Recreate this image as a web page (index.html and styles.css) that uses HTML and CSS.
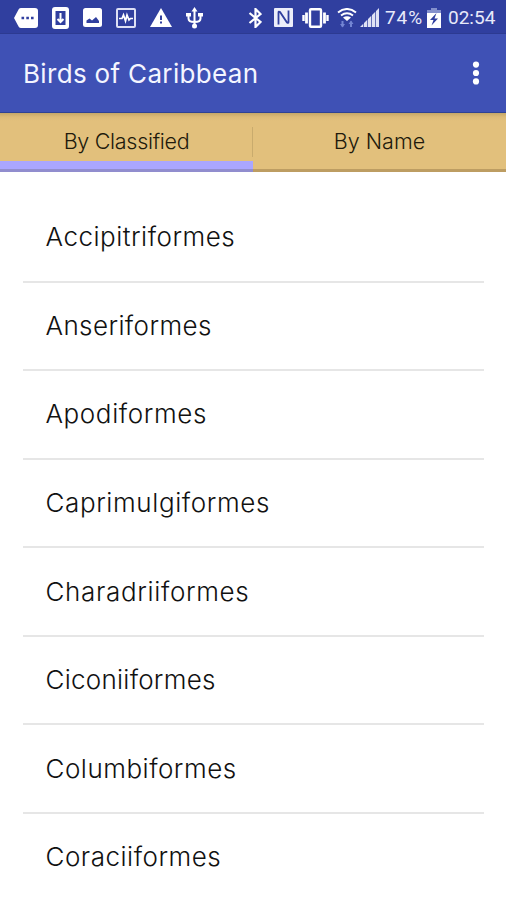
FILE: index.html
```html
<!DOCTYPE html>
<html lang="en">

<head>
  <meta charset="UTF-8">
  <meta name="viewport" content="width=device-width, initial-scale=1.0">
  <title>Birds of Caribbean</title>
  <link rel="stylesheet" href="styles.css">
</head>

<body>
  <div class="status-bar">
    <div class="notifications">
      <svg width="24" height="20" viewBox="0 0 24 20">
        <path fill="#fff" d="M7 0h14q3 0 3 3v14q0 3-3 3H7q-1.500 0-2.300-1.200L0 10l4.700-8.800Q5.500 0 7 0z" />
        <path fill="#303f9f" d="M7.500 8.700h2.600v2.600H7.500zM12.300 8.700h2.600v2.600h-2.600zM17 8.700h2.600v2.600H17z" />
      </svg>
      <svg width="17" height="22" viewBox="0 0 17 22">
        <rect width="17" height="22" rx="3" fill="#fff" />
        <path fill="#303f9f" d="M3.500 4h10v14h-10z" />
        <path d="M8.500 6v9M5.500 12l3 3 3-3" fill="none" stroke="#fff" stroke-width="2" />
      </svg>
      <svg width="19" height="19" viewBox="0 0 19 19">
        <rect width="19" height="19" rx="2.500" fill="#fff" />
        <path fill="#303f9f" d="M3.500 15v-2.500l3-2 2.500 2 4-3.500 3 4V15z" />
      </svg>
      <svg width="20" height="20" viewBox="0 0 20 20">
        <rect x="1" y="1" width="18" height="18" rx="1" fill="none" stroke="#dde0f5" stroke-width="2" />
        <path d="M3 10.500h3l1.500-3.500 2 6 1.500-6 2 5 1.500-1.500H17" fill="none" stroke="#fff" stroke-width="1.700" />
      </svg>
      <svg width="22" height="19" viewBox="0 0 22 19">
        <path fill="#fff" d="M11 0l11 19H0z" />
        <path fill="#303f9f" d="M10 7.500h2v4.500h-2zM10 13.500h2v2h-2z" />
      </svg>
      <svg width="17" height="22" viewBox="0 0 17 22">
        <path d="M8.500 3v16M2.500 7v4.500q0 3.500 6 3.500t6-3.500V7" fill="none" stroke="#fff" stroke-width="2" />
        <path fill="#fff" d="M8.500 0l3 4.500h-6zM0 6h5v3.500H0zM12 6h5v3.500h-5z" />
        <circle cx="8.500" cy="19" r="2.500" fill="#fff" />
      </svg>
    </div>
    <div class="system">
      <svg class="bluetooth" width="14" height="20" viewBox="0 0 14 20">
        <path d="M1.500 5l11 9-5 5V1l5 5-11 9" fill="none" stroke="#fff" stroke-width="2.200" />
      </svg>
      <svg class="nfc" width="19" height="19" viewBox="0 0 19 19">
        <rect width="19" height="19" rx="1" fill="#eceefa" />
        <path d="M4.500 16.500V4.500q0-1.500 1.500-.5l7 10.500q1.500 1 1.500-.5V2.500" fill="none" stroke="#303f9f" stroke-width="1.800" />
      </svg>
      <svg class="vibrate" width="27" height="20" viewBox="0 0 27 20">
        <rect x="8" y="1.200" width="11" height="17.600" rx="1" fill="none" stroke="#fff" stroke-width="2.400" />
        <path d="M4.500 4.500v11M22.500 4.500v11" stroke="#fff" stroke-width="2.800" />
        <path d="M1.500 7v6M25.500 7v6" stroke="#fff" stroke-width="2.400" />
      </svg>
      <svg class="wifi" width="20" height="20" viewBox="0 0 20 20">
        <path d="M1 4.500q9-7 18 0M4 7.500q6-4.500 12 0" fill="none" stroke="#fff" stroke-width="2" />
        <path fill="#fff" d="M6 9.500q4-2.500 8 0l-4 3.500z" />
        <path d="M5.500 13v5.500M14 19v-5.500" stroke="#7385d3" stroke-width="2" />
        <path fill="#7385d3" d="M3 16h5l-2.500 3.500zM11.500 16h5L14 12.500z" />
      </svg>
      <svg class="signal" width="19" height="19" viewBox="0 0 19 19">
        <path fill="#dfe2f4" d="M0 19l3.300-3.300V19zM4 19v-4l3.300-3.300V19zM8 19v-8l3.300-3.300V19zM12 19V7l3.300-3.300V19zM16 19V3l3-3v19z" />
      </svg>
      <span class="percent">74%</span>
      <svg class="battery" width="14" height="20" viewBox="0 0 14 20">
        <path fill="#8490cc" d="M4 0h6v2h4v3H0V2h4z" />
        <path fill="#fff" d="M0 5h14v15H0z" />
        <path fill="#303f9f" d="M9.500 5L3 12h3.500l-2 5.500 6.500-7H7.500z" />
      </svg>
      <span class="clock">02:54</span>
    </div>
  </div>

  <header>
    <h1>Birds of Caribbean</h1>
    <svg width="8" height="24" viewBox="0 0 8 24" fill="#fff">
      <circle cx="4" cy="3.600" r="3.100" />
      <circle cx="4" cy="12" r="3.100" />
      <circle cx="4" cy="20.400" r="3.100" />
    </svg>
  </header>

  <nav>
    <a class="tab active"><span>By Classified</span></a>
    <a class="tab"><span>By Name</span></a>
  </nav>

  <ul class="bird-list">
    <li><span class="accipitriformes">Accipitriformes</span></li>
    <li><span class="anseriformes">Anseriformes</span></li>
    <li><span class="apodiformes">Apodiformes</span></li>
    <li><span class="caprimulgiformes">Caprimulgiformes</span></li>
    <li><span class="charadriiformes">Charadriiformes</span></li>
    <li><span class="ciconiiformes">Ciconiiformes</span></li>
    <li><span class="columbiformes">Columbiformes</span></li>
    <li><span class="coraciiformes">Coraciiformes</span></li>
  </ul>
</body>

</html>
```
FILE: styles.css
```css
* {
  box-sizing: border-box;
}

body {
  margin: 0;
  height: 900px;
  overflow: hidden;
  font-family: Inter, sans-serif;
  background-color: #fff;
  color: #111;
}

svg {
  display: block;
  flex: none;
}

.status-bar {
  display: flex;
  justify-content: space-between;
  height: 34px;
  padding: 2px 11px 0 14px;
  background-color: #303f9f;
  border-bottom: 1px solid #2c3a91;
  color: #e8eafa;
}

.notifications, .system {
  display: flex;
  align-items: center;
}

.notifications {
  gap: 14px;
}

.nfc {
  margin-left: 12px;
}

.vibrate {
  margin-left: 9px;
}

.wifi {
  margin-left: 8px;
}

.signal {
  margin-left: 3px;
}

.percent, .clock {
  font-family: Roboto, sans-serif;
  font-size: 19px;
  line-height: 20px;
  white-space: nowrap;
}

.percent {
  width: 38px;
  margin-left: 6px;
  letter-spacing: 0.9px;
}

.battery {
  margin-left: 4px;
}

.clock {
  width: 47px;
  margin-left: 7px;
}

header {
  display: flex;
  align-items: center;
  justify-content: space-between;
  height: 79px;
  padding: 0 26px 0 23px;
  background-color: #3f51b5;
  border-bottom: 1px solid #2e4294;
}

h1 {
  margin: 0;
  font-size: 26px;
  font-weight: 400;
  letter-spacing: 0.33px;
  color: #f4f5ff;
}

nav {
  display: flex;
  height: 59px;
  background: linear-gradient(#c5a768, #dcba77 4px, #e2c07c 8px);
}

.tab {
  flex: 1;
  display: flex;
  justify-content: center;
  padding-top: 14px;
  border-bottom: 3px solid #bd9d62;
  font-size: 21.5px;
  font-weight: 350;
  line-height: 29px;
  color: #211a0c;
}

.tab.active {
  border-bottom-color: #918dce;
  letter-spacing: -0.3px;
  background: linear-gradient(#c9ab6d, #c9ab6d) right 14px / 1px 30px no-repeat,
    linear-gradient(#aaa6ff, #aaa6ff) bottom / 100% 8px no-repeat;
}

.bird-list {
  margin: 0;
  padding: 22px 22px 0 23px;
  list-style: none;
}

.bird-list li {
  display: flex;
  align-items: center;
  height: 88.570px;
  padding: 0 22.500px 1px;
  border-bottom: 2px solid #e6e6e6;
  font-size: 26px;
  font-weight: 350;
}

.accipitriformes {
  letter-spacing: 0.5px;
}

.anseriformes {
  letter-spacing: 0.4px;
}

.apodiformes {
  letter-spacing: 0.6px;
}

.caprimulgiformes {
  letter-spacing: 0.6px;
}

.charadriiformes {
  letter-spacing: 0.65px;
}

.ciconiiformes {
  letter-spacing: 0.25px;
}

.columbiformes {
  letter-spacing: 0.5px;
}

.coraciiformes {
  letter-spacing: 0.5px;
}
```
